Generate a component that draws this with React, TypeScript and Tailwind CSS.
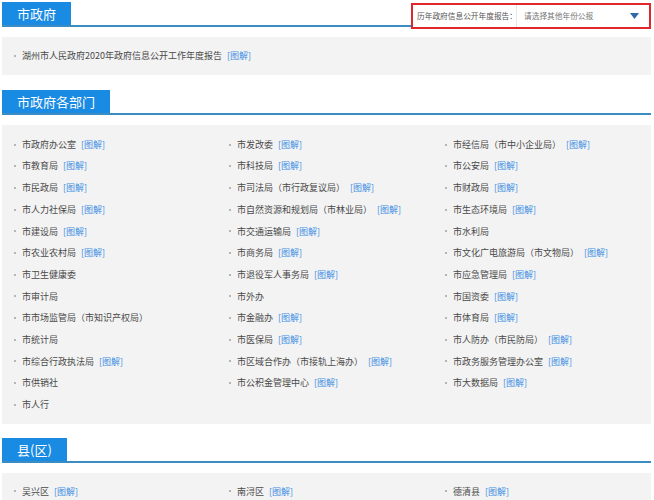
const font = { fontFamily: '"Noto Sans CJK SC", "Noto Sans", sans-serif' };

type Item = { name: string; link?: boolean } | null;

const depts: Item[] = [
  { name: "市政府办公室", link: true }, { name: "市发改委", link: true }, { name: "市经信局（市中小企业局）", link: true },
  { name: "市教育局", link: true }, { name: "市科技局", link: true }, { name: "市公安局", link: true },
  { name: "市民政局", link: true }, { name: "市司法局（市行政复议局）", link: true }, { name: "市财政局", link: true },
  { name: "市人力社保局", link: true }, { name: "市自然资源和规划局（市林业局）", link: true }, { name: "市生态环境局", link: true },
  { name: "市建设局", link: true }, { name: "市交通运输局", link: true }, { name: "市水利局" },
  { name: "市农业农村局", link: true }, { name: "市商务局", link: true }, { name: "市文化广电旅游局（市文物局）", link: true },
  { name: "市卫生健康委" }, { name: "市退役军人事务局", link: true }, { name: "市应急管理局", link: true },
  { name: "市审计局" }, { name: "市外办" }, { name: "市国资委", link: true },
  { name: "市市场监管局（市知识产权局）" }, { name: "市金融办", link: true }, { name: "市体育局", link: true },
  { name: "市统计局" }, { name: "市医保局", link: true }, { name: "市人防办（市民防局）", link: true },
  { name: "市综合行政执法局", link: true }, { name: "市区域合作办（市接轨上海办）", link: true }, { name: "市政务服务管理办公室", link: true },
  { name: "市供销社" }, { name: "市公积金管理中心", link: true }, { name: "市大数据局", link: true },
  { name: "市人行" }, null, null,
];

const counties: Item[] = [
  { name: "吴兴区", link: true }, { name: "南浔区", link: true }, { name: "德清县", link: true },
];

const Row = ({ item }: { item: Item }) =>
  item ? (
    <div className="flex items-center h-[21.7px] whitespace-nowrap">
      <span className="w-[2px] h-[2px] bg-[#b5b5b5] mr-[6px]" />
      <span className="text-[#4a4a4a]">{item.name}</span>
      {item.link && <a className="ml-[5px] text-[#3d8ee3]">[图解]</a>}
    </div>
  ) : (
    <div className="h-[21.7px]" />
  );

const Head = ({ title, children }: { title: string; children?: React.ReactNode }) => (
  <div className="flex justify-between items-end border-b-2 border-[#3b8cc2] h-[25px]">
    <div className="h-[23px] px-[15px] bg-[#1a8be2] text-white text-[13px] leading-[23px]">{title}</div>
    {children}
  </div>
);

const App = () => {
  return (
    <div className="bg-white w-[654px] h-[500px] overflow-hidden pl-[2px] pr-[3px] pt-[2px]" style={font}>
      <Head title="市政府">
        <div className="relative top-[2px] self-start mt-[-1px] w-[240px] h-[26px] border-2 border-[#e0262b] bg-white flex items-center text-[7.7px] whitespace-nowrap">
          <div className="w-[103px] pl-[4px] text-[#555]">历年政府信息公开年度报告：</div>
          <div className="h-full w-px bg-[#e8e8e8]" />
          <div className="flex-1 flex justify-between items-center pl-[7px] pr-[10px] text-[#777]">
            <span>请选择其他年份公报</span>
            <svg width="9" height="6" viewBox="0 0 9 6"><path d="M0 0h9L4.5 6z" fill="#2e6aa8" /></svg>
          </div>
        </div>
      </Head>
      <div className="mt-[10px] bg-[#f3f3f3] px-[12px] py-[8px] text-[9px]">
        <Row item={{ name: "湖州市人民政府2020年政府信息公开工作年度报告", link: true }} />
      </div>

      <div className="mt-[15px]">
        <Head title="市政府各部门" />
      </div>
      <div className="mt-[10px] bg-[#f3f3f3] px-[12px] pt-[9px] pb-[8px] text-[9px] grid grid-cols-[215px_216px_1fr]">
        {depts.map((d, i) => <Row key={i} item={d} />)}
      </div>

      <div className="mt-[14px]">
        <Head title="县(区)" />
      </div>
      <div className="mt-[10px] bg-[#f3f3f3] px-[12px] pt-[8px] pb-[8px] text-[9px] grid grid-cols-[215px_216px_1fr]">
        {counties.map((d, i) => <Row key={i} item={d} />)}
      </div>
    </div>
  );
};

export default App;
